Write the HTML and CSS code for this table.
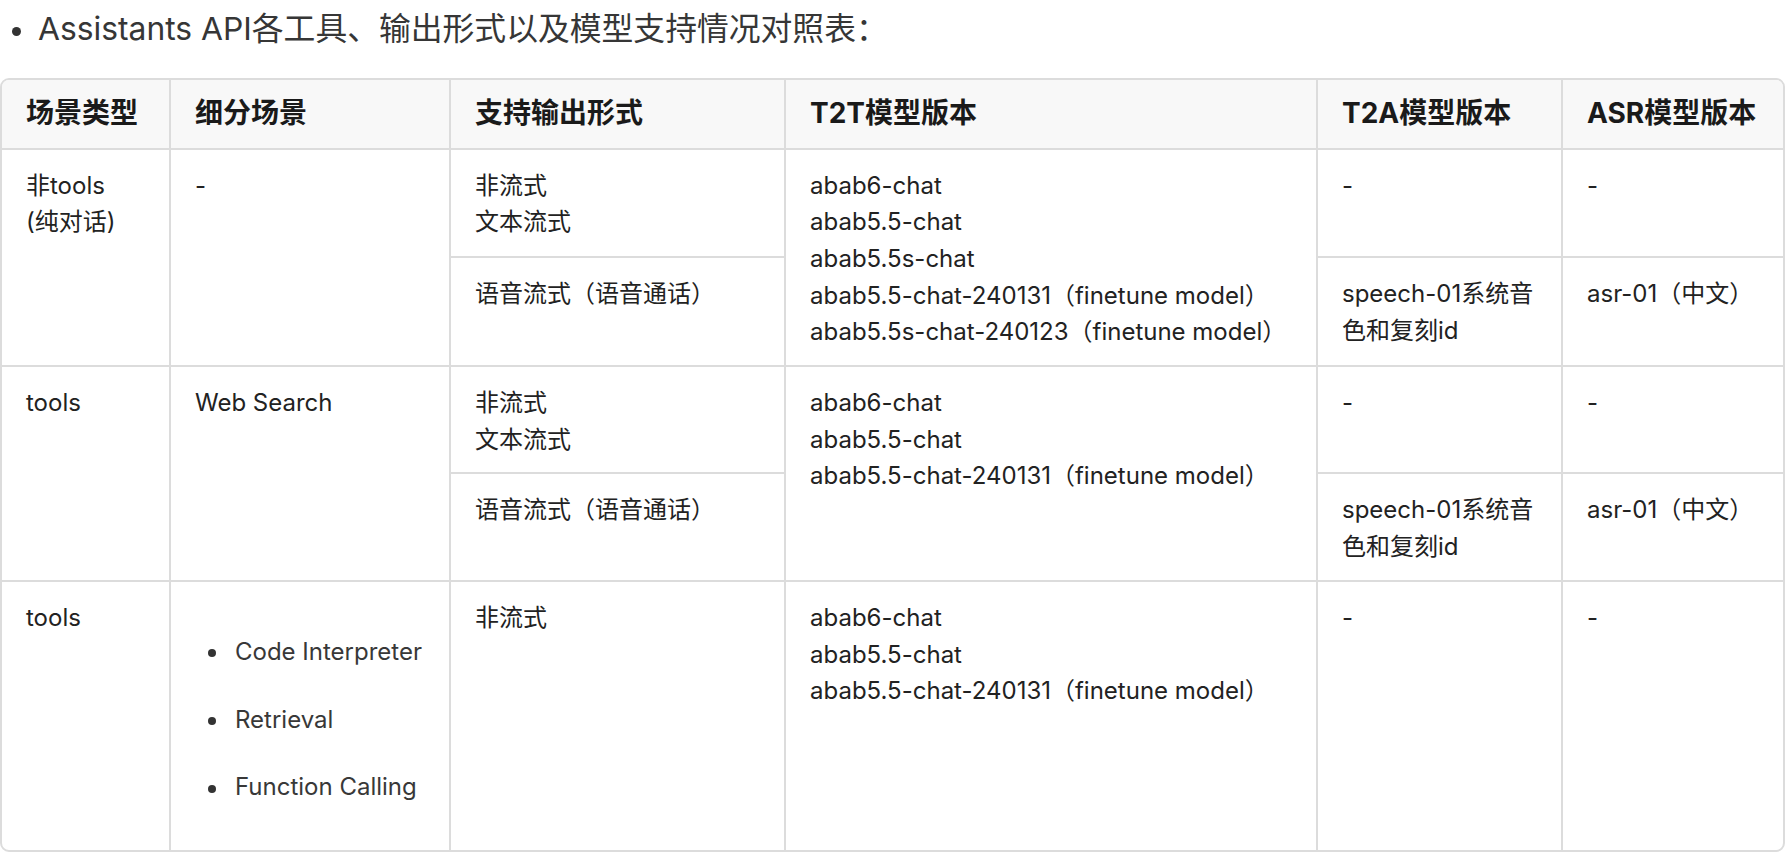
FILE: index.html
```html
<!DOCTYPE html>
<html lang="zh-CN">
<head>
<meta charset="utf-8">
<title>Assistants API 对照表</title>
<link rel="stylesheet" href="styles.css">
</head>
<body>
<ul class="intro">
  <li>Assistants API各工具、输出形式以及模型支持情况对照表：</li>
</ul>
<div class="table-wrap">
  <table class="grid">
    <colgroup>
      <col class="c1"><col class="c2"><col class="c3"><col class="c4"><col class="c5"><col class="c6">
    </colgroup>
    <thead>
      <tr>
        <th class="first">场景类型</th>
        <th>细分场景</th>
        <th>支持输出形式</th>
        <th>T2T模型版本</th>
        <th>T2A模型版本</th>
        <th>ASR模型版本</th>
      </tr>
    </thead>
    <tbody>
      <tr>
        <td class="first" rowspan="2">非tools<br>(纯对话)</td>
        <td rowspan="2">-</td>
        <td>非流式<br>文本流式</td>
        <td rowspan="2">abab6-chat<br>abab5.5-chat<br>abab5.5s-chat<br>abab5.5-chat-240131（finetune model）<br>abab5.5s-chat-240123（finetune model）</td>
        <td>-</td>
        <td>-</td>
      </tr>
      <tr>
        <td>语音流式（语音通话）</td>
        <td>speech-01系统音<br>色和复刻id</td>
        <td>asr-01（中文）</td>
      </tr>
      <tr>
        <td class="first" rowspan="2">tools</td>
        <td rowspan="2">Web Search</td>
        <td>非流式<br>文本流式</td>
        <td rowspan="2">abab6-chat<br>abab5.5-chat<br>abab5.5-chat-240131（finetune model）</td>
        <td>-</td>
        <td>-</td>
      </tr>
      <tr>
        <td>语音流式（语音通话）</td>
        <td>speech-01系统音<br>色和复刻id</td>
        <td>asr-01（中文）</td>
      </tr>
      <tr>
        <td class="first">tools</td>
        <td>
          <ul class="tools">
            <li>Code Interpreter</li>
            <li>Retrieval</li>
            <li>Function Calling</li>
          </ul>
        </td>
        <td>非流式</td>
        <td>abab6-chat<br>abab5.5-chat<br>abab5.5-chat-240131（finetune model）</td>
        <td>-</td>
        <td>-</td>
      </tr>
    </tbody>
  </table>
</div>
</body>
</html>
```

FILE: styles.css
```css
html, body {
  margin: 0;
  padding: 0;
  background: #ffffff;
}

body {
  font-family: Inter, "Noto Sans CJK SC", sans-serif;
  color: #262626;
}

.intro {
  list-style: none;
  margin: 0;
  padding: 5px 0 0 0;
}

.intro li {
  font-size: 31.8px;
  line-height: 48px;
  color: #363636;
  white-space: nowrap;
}

.intro li::before {
  content: "";
  display: inline-block;
  width: 9px;
  height: 9px;
  border-radius: 50%;
  background: #333333;
  margin: 0 17px 0 12px;
  vertical-align: middle;
}

.table-wrap {
  margin-top: 25px;
  width: 1785px;
  box-sizing: border-box;
  border: 2px solid #dcdcdc;
  border-radius: 9px;
  overflow: hidden;
}

.grid {
  width: 1781px;
  table-layout: fixed;
  border-collapse: separate;
  border-spacing: 0;
}

.c1 { width: 167px; }
.c2 { width: 280px; }
.c3 { width: 335px; }
.c4 { width: 532px; }
.c5 { width: 245px; }
.c6 { width: 222px; }

.grid th,
.grid td {
  box-sizing: border-box;
  border-left: 2px solid #dcdcdc;
  border-top: 2px solid #dcdcdc;
  padding: 18px 12px 14px 24px;
  text-align: left;
  vertical-align: top;
  line-height: 36.7px;
}

.grid th {
  border-top: none;
  padding-top: 16px;
  padding-bottom: 16px;
  line-height: 35.5px;
  background: #f8f8f8;
  font-size: 28px;
  font-weight: 700;
  color: #1a1a1a;
  white-space: nowrap;
}

.grid td {
  font-size: 24px;
  color: #222222;
}

.grid .first {
  border-left: none;
}

.tools {
  list-style: none;
  margin: 0;
  padding: 34px 0 30px 0;
  color: #383838;
}

.tools li + li {
  margin-top: 31px;
}

.tools li::before {
  content: "";
  display: inline-block;
  width: 8px;
  height: 8px;
  border-radius: 50%;
  background: #333333;
  margin: 0 19px 0 13px;
  vertical-align: middle;
}
```
